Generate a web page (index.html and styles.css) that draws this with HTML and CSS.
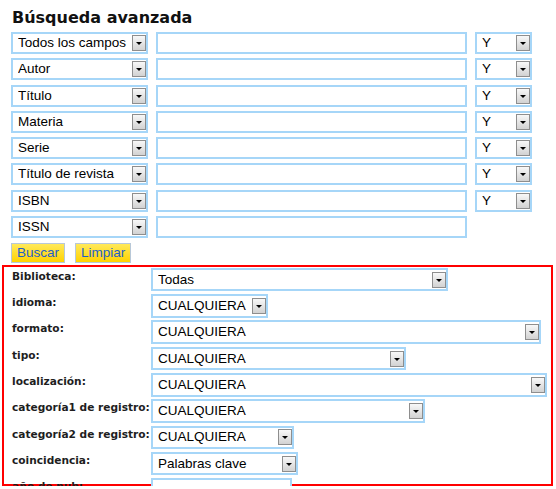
FILE: index.html
```html
<!DOCTYPE html>
<html lang="es">
<head>
<meta charset="utf-8">
<title>Búsqueda avanzada</title>
<link rel="stylesheet" href="styles.css">
</head>
<body>
<h1 class="title">Búsqueda avanzada</h1>
<div class="search-grid">
  <div class="sel"><span class="txt">Todos los campos</span><span class="arr"></span></div>
  <div class="inp"></div>
  <div class="sel"><span class="txt">Y</span><span class="arr"></span></div>

  <div class="sel"><span class="txt">Autor</span><span class="arr"></span></div>
  <div class="inp"></div>
  <div class="sel"><span class="txt">Y</span><span class="arr"></span></div>

  <div class="sel"><span class="txt">Título</span><span class="arr"></span></div>
  <div class="inp"></div>
  <div class="sel"><span class="txt">Y</span><span class="arr"></span></div>

  <div class="sel"><span class="txt">Materia</span><span class="arr"></span></div>
  <div class="inp"></div>
  <div class="sel"><span class="txt">Y</span><span class="arr"></span></div>

  <div class="sel"><span class="txt">Serie</span><span class="arr"></span></div>
  <div class="inp"></div>
  <div class="sel"><span class="txt">Y</span><span class="arr"></span></div>

  <div class="sel"><span class="txt">Título de revista</span><span class="arr"></span></div>
  <div class="inp"></div>
  <div class="sel"><span class="txt">Y</span><span class="arr"></span></div>

  <div class="sel"><span class="txt">ISBN</span><span class="arr"></span></div>
  <div class="inp"></div>
  <div class="sel"><span class="txt">Y</span><span class="arr"></span></div>

  <div class="sel"><span class="txt">ISSN</span><span class="arr"></span></div>
  <div class="inp"></div>
</div>
<div class="buttons">
  <span class="btn">Buscar</span>
  <span class="btn">Limpiar</span>
</div>
<div class="limits">
  <div class="lbl">Biblioteca:</div>
  <div class="sel big w-biblio"><span class="txt">Todas</span><span class="arr"></span></div>

  <div class="lbl">idioma:</div>
  <div class="sel big w-idioma"><span class="txt">CUALQUIERA</span><span class="arr"></span></div>

  <div class="lbl">formato:</div>
  <div class="sel big w-formato"><span class="txt">CUALQUIERA</span><span class="arr"></span></div>

  <div class="lbl">tipo:</div>
  <div class="sel big w-tipo"><span class="txt">CUALQUIERA</span><span class="arr"></span></div>

  <div class="lbl">localización:</div>
  <div class="sel big w-local"><span class="txt">CUALQUIERA</span><span class="arr"></span></div>

  <div class="lbl">categoría1 de registro:</div>
  <div class="sel big w-cat1"><span class="txt">CUALQUIERA</span><span class="arr"></span></div>

  <div class="lbl">categoría2 de registro:</div>
  <div class="sel big w-cat2"><span class="txt">CUALQUIERA</span><span class="arr"></span></div>

  <div class="lbl">coincidencia:</div>
  <div class="sel big w-coin"><span class="txt">Palabras clave</span><span class="arr"></span></div>

  <div class="lbl">año de pub:</div>
  <div class="inp big w-anio"></div>
</div>
</body>
</html>
```
FILE: styles.css
```css
html, body {
  margin: 0;
  padding: 0;
  background: #fff;
}
body {
  font-family: "Liberation Sans", Arial, sans-serif;
  font-size: 13.5px;
  color: #000;
  overflow: hidden;
}
.title {
  margin: 0;
  padding: 7.5px 0 0 12px;
  font-family: "DejaVu Sans", Verdana, sans-serif;
  font-weight: bold;
  font-size: 16px;
  line-height: 20px;
  color: #111;
}
.search-grid {
  margin: 4.5px 0 0 11px;
  display: grid;
  grid-template-columns: 137px 311px 57px;
  grid-auto-rows: 22px;
  column-gap: 8px;
  row-gap: 4.3px;
}
.sel {
  display: flex;
  align-items: center;
  box-sizing: border-box;
  border: 2px solid #a6d6f8;
  background: #fff;
  padding-left: 5px;
  height: 22px;
  white-space: nowrap;
}
.sel .txt {
  flex: 1;
  overflow: hidden;
  line-height: 16px;
}
.sel .arr {
  flex: none;
  width: 14px;
  height: 16px;
  box-sizing: border-box;
  border: 1px solid #8e8e8e;
  background: linear-gradient(#f8f8f8, #d2d2d2);
  display: flex;
  align-items: center;
  justify-content: center;
}
.sel .arr::after {
  content: "";
  width: 0;
  height: 0;
  border-left: 3px solid transparent;
  border-right: 3px solid transparent;
  border-top: 3px solid #000;
  margin-top: 1px;
}
.inp {
  box-sizing: border-box;
  border: 2px solid #a6d6f8;
  background: #fff;
  height: 22px;
}
.buttons {
  display: flex;
  gap: 10px;
  margin: 4.8px 0 0 11px;
  height: 21px;
}
.btn {
  display: flex;
  align-items: center;
  box-sizing: border-box;
  height: 20px;
  padding: 0 5px;
  border: 1px solid #b8c8d8;
  background: linear-gradient(#ffe95a, #ffd200);
  color: #1f5fc6;
}
.limits {
  box-sizing: border-box;
  width: 551px;
  height: 221px;
  margin: 1px 0 0 2px;
  border: 2px solid #ff0000;
  padding: 1px 0 0 8px;
  display: grid;
  grid-template-columns: 139px 1fr;
  grid-auto-rows: 23.5px;
  row-gap: 2.8px;
  align-items: start;
}
.lbl {
  padding-top: 2px;
  font-family: "DejaVu Sans", Verdana, sans-serif;
  font-weight: bold;
  font-size: 10.6px;
  line-height: 13px;
  color: #1e1e1e;
  white-space: nowrap;
}
.sel.big, .inp.big {
  height: 23.5px;
}
.w-biblio { width: 297px; }
.w-idioma { width: 117px; }
.w-formato { width: 390px; }
.w-tipo { width: 255px; }
.w-local { width: 396px; }
.w-cat1 { width: 274px; }
.w-cat2 { width: 143px; }
.w-coin { width: 147px; }
.w-anio { width: 141px; }
```
